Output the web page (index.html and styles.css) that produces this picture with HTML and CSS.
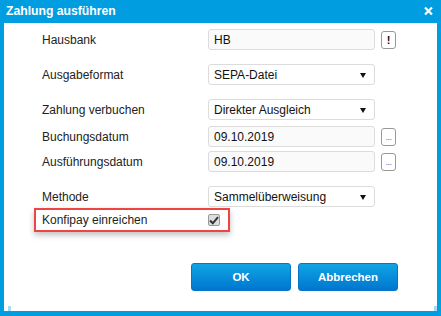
FILE: index.html
```html
<!DOCTYPE html>
<html lang="de">
<head>
    <meta charset="UTF-8">
    <link rel="stylesheet" href="styles.css">
    <title>Zahlung ausführen</title>
</head>
<body>
    <div class="dialog">
        <div class="dialog-header">
            <span class="dialog-title">Zahlung ausführen</span>
            <svg class="close" width="9" height="8" viewBox="0 0 9 8">
                <path d="M1 0.5 L8 7.5 M8 0.5 L1 7.5" stroke="#fff" stroke-width="2.2"/>
            </svg>
        </div>

        <div class="dialog-body">
            <div class="row">
                <label class="label">Hausbank</label>
                <div class="field">HB</div>
                <span class="side-btn"><b>!</b></span>
            </div>
            <div class="row gap-big">
                <label class="label">Ausgabeformat</label>
                <div class="field select">SEPA-Datei
                    <svg class="arrow" width="6" height="5" viewBox="0 0 6 5"><path d="M0 0 H6 L3 5 Z" fill="#111"/></svg>
                </div>
            </div>
            <div class="row gap-big">
                <label class="label">Zahlung verbuchen</label>
                <div class="field select">Direkter Ausgleich
                    <svg class="arrow" width="6" height="5" viewBox="0 0 6 5"><path d="M0 0 H6 L3 5 Z" fill="#111"/></svg>
                </div>
            </div>
            <div class="row gap-small">
                <label class="label">Buchungsdatum</label>
                <div class="field">09.10.2019</div>
                <span class="side-btn dots">...</span>
            </div>
            <div class="row gap-tiny">
                <label class="label">Ausführungsdatum</label>
                <div class="field">09.10.2019</div>
                <span class="side-btn dots">...</span>
            </div>
            <div class="row gap-big">
                <label class="label">Methode</label>
                <div class="field select">Sammelüberweisung
                    <svg class="arrow" width="6" height="5" viewBox="0 0 6 5"><path d="M0 0 H6 L3 5 Z" fill="#111"/></svg>
                </div>
            </div>

            <!-- highlighted option -->
            <div class="highlight">
                <label class="label">Konfipay einreichen</label>
                <span class="checkbox">
                    <svg width="10" height="9" viewBox="0 0 10 9">
                        <path d="M1 4.5 L3.8 7.3 L9 1.2" stroke="#333" stroke-width="2" fill="none"/>
                    </svg>
                </span>
            </div>

            <div class="actions">
                <button class="btn">OK</button>
                <button class="btn">Abbrechen</button>
            </div>
            <span class="corner corner-left"></span>
            <span class="corner corner-right"></span>
        </div>
    </div>
</body>
</html>
```

FILE: styles.css
```css
body {
  margin: 0;
  font-family: Arial, "Liberation Sans", sans-serif;
  font-size: 12px;
  color: #222;
}

.dialog {
  width: 441px;
  height: 316px;
  background-color: #009ee0;
  display: flex;
  flex-direction: column;
}

.dialog-header {
  height: 23px;
  display: flex;
  align-items: center;
  justify-content: space-between;
  padding: 0 8px 0 6px;
}

.dialog-title {
  color: #fff;
  font-weight: bold;
  font-size: 12.2px;
  margin-top: -1px;
}

.close {
  margin-top: -1px;
}

.dialog-body {
  position: relative;
  background-color: #fff;
  margin: 0 4px 5px 4px;
  flex: 1;
  padding: 6px 0 0 38px;
}

.row {
  display: flex;
  align-items: center;
  height: 21px;
}

.gap-big {
  margin-top: 14px;
}

.gap-small {
  margin-top: 6px;
}

.gap-tiny {
  margin-top: 4px;
}

.label {
  width: 166px;
}

.field {
  box-sizing: border-box;
  width: 167px;
  height: 21px;
  border: 1px solid #dcdcdc;
  border-radius: 3px;
  background-color: #fafafa;
  padding: 0 8px 0 5px;
  display: flex;
  align-items: center;
  justify-content: space-between;
  color: #111;
}

.select {
  background-color: #fff;
}

.arrow {
  margin-top: 1px;
}

.side-btn {
  box-sizing: border-box;
  width: 15px;
  height: 18px;
  margin-left: 6px;
  border: 1px solid #999;
  border-radius: 3px;
  display: flex;
  align-items: center;
  justify-content: center;
  font-size: 11px;
  color: #111;
}

.dots {
  color: #3a7bd5;
  font-size: 9px;
  letter-spacing: -0.5px;
  align-items: flex-end;
  padding-bottom: 3px;
}

.highlight {
  display: flex;
  align-items: center;
  box-sizing: border-box;
  width: 196px;
  height: 24px;
  margin: 1px 0 0 -8px;
  padding-left: 6px;
  border: 2px solid #ee4444;
  box-shadow: 0 3px 6px rgba(0, 0, 0, 0.25);
}

.checkbox {
  box-sizing: border-box;
  width: 12px;
  height: 12px;
  border: 1px solid #999;
  border-radius: 2px;
  background-color: #ddd;
  display: flex;
  align-items: center;
  justify-content: center;
}

.actions {
  display: flex;
  gap: 7px;
  margin: 31px 0 0 149px;
}

.btn {
  width: 100px;
  height: 28px;
  border: 1px solid #0a74c4;
  border-radius: 3px;
  background: linear-gradient(#10a4e4, #0076d0);
  color: #fff;
  font-family: Arial, "Liberation Sans", sans-serif;
  font-weight: bold;
  font-size: 11.5px;
  cursor: pointer;
}

.corner {
  position: absolute;
  bottom: 0;
  width: 3px;
  height: 5px;
  background-color: #a8dcf3;
}

.corner-left {
  left: 4px;
}

.corner-right {
  right: 0;
}
```
